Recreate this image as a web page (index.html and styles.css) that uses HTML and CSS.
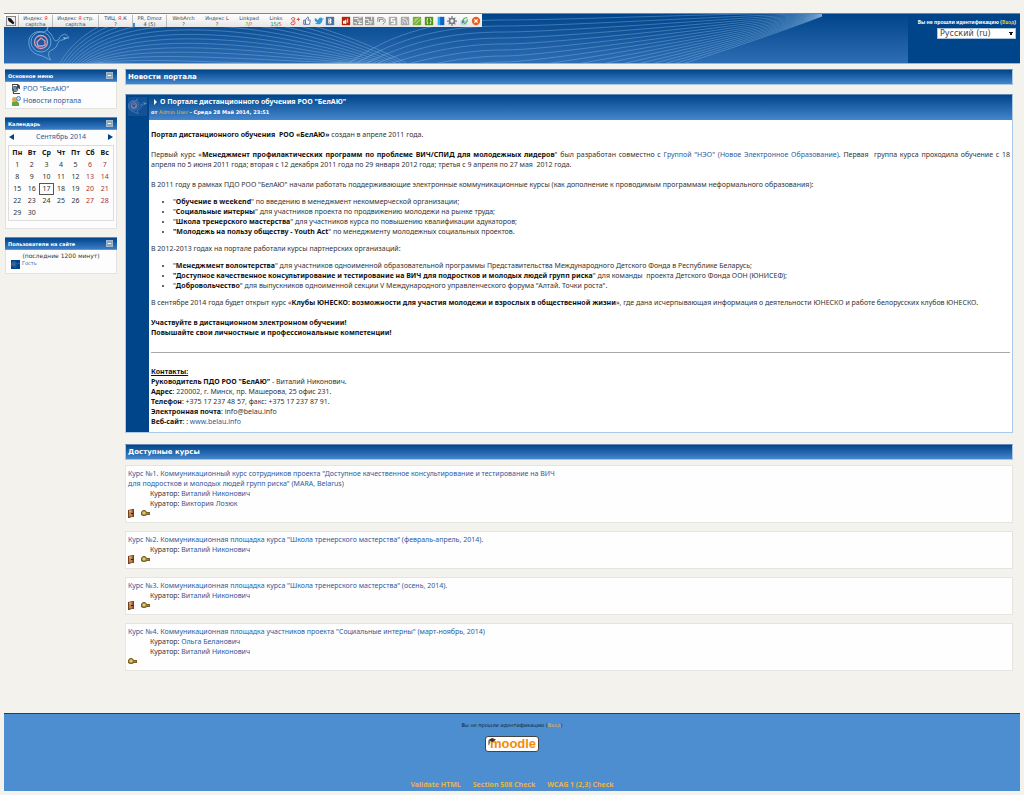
FILE: index.html
```html
<!DOCTYPE html>
<html lang="ru">
<head>
<meta charset="utf-8">
<title>Портал дистанционного обучения РОО "БелАЮ"</title>
<link rel="stylesheet" href="styles.css">
</head>
<body>
<svg class="defs" width="0" height="0" aria-hidden="true">
  <symbol id="bird" viewBox="0 0 42 36">
    <g fill="none" stroke="#6ba3d8" stroke-width="1">
      <path d="M20 1c-1 3-1 4 2 6 4 4 3 10 8 7 3-3 2-5 5-5 2-2 4 0 6 3-3-1-4 2-7 2-5 0-4 6-7 8-2 2-5 2-6 4-1 3 0 6 2 8-4-1-7-4-12-5C4 27 0 22 1 14 2 8 9 4 15 6c3 0 4-2 5-5z"/>
      <circle cx="13" cy="16" r="10"/>
    </g>
    <path d="M35 11l5 1-4 1z" fill="#9cc4ea"/>
    <g fill="none" stroke="#dc9db4" stroke-width="1.3">
      <circle cx="13" cy="16" r="6.5"/>
      <path d="M9 16l4-4 4 3v4l-3 1h-4z"/>
    </g>
  </symbol>
  <symbol id="key" viewBox="0 0 9 7">
    <path d="M0 2l2-2h2l2 2h3v3H6L4 6H2L0 5z" fill="#7a6026"/>
    <circle cx="3" cy="3" r="1.8" fill="#dfc878"/><path d="M5 3.5h3" stroke="#b5781f"/>
  </symbol>
  <symbol id="door" viewBox="0 0 6 9">
    <path d="M0 1l5-1h1v8H4L1 9H0z" fill="#6b4222"/><path d="M1 1l3.500 0v6.500l-3.500 0z" fill="#c58550"/><path d="M3 4h2v1H3z" fill="#33200f"/><path d="M1 2h2v1H1z" fill="#e0ad7c"/>
  </symbol>
</svg>

<header class="header">
  <svg class="waves" id="waves" aria-hidden="true"></svg>
  <svg class="brand" aria-hidden="true"><use href="#bird"/></svg>
  <div class="account">
    <p>Вы не прошли идентификацию (<a href="#login">Вход</a>)</p>
    <select class="lang" aria-label="Язык"><option>Русский (ru)</option></select>
  </div>
  <div class="toolbar">
    <button class="pen" aria-label="Инструменты"><svg viewBox="0 0 12 12"><path d="M0 0h12v12H0z" fill="#777"/><path d="M1 1h10v10H1z" fill="#eee"/><path d="M2 2l4 1 4 5-1 2-2-1-4-3z" fill="#111"/></svg></button>
    <button class="w34 sep">Индекс <b>Я</b><br>captcha</button>
    <button class="w46 sep">Индекс <b>Я</b> стр.<br>captcha</button>
    <button class="w34 sep">ТИЦ, <b>Я</b>.К<br>?</button>
    <button class="w34 sep bar">PR, Dmoz<br>4 (5)</button>
    <button class="w34 sep">WebArch<br>?</button>
    <button class="w34">Индекс L<br>?</button>
    <button class="w30">Linkpad<br><i>?</i>/<b>?</b></button>
    <button class="w24">Links<br><i>15</i>/<b>5</b></button>
    <div class="icons">
      <svg viewBox="0 0 12 12"><path d="M6 3C4 1 1 2 2 4s4 1 4-1M5 5c-1 1 2 2 1 4s-5 2-5 0 3-2 4-2M8 4h4M10 2v4" stroke="#d55140" stroke-width="1.200" fill="none"/></svg>
      <svg viewBox="0 0 12 12"><path d="M2 5h2v5H2zM4 5l3-4 1 1-1 3h3l-1 5H4z" fill="#fff" stroke="#4a68a5"/></svg>
      <svg viewBox="0 0 12 12"><path d="M1 2l4 3c0-4 4-4 5-2l2 0-2 2c0 5-6 6-9 4l3-1-3-2z" fill="#2a9fd8"/></svg>
      <svg viewBox="0 0 12 12"><path d="M1 1h10v10H1z" fill="#4b75a5"/><path d="M4 3h3l1 2-1 1 1 2-1 1H4z" fill="#fff"/><path d="M5 4h1v1H5zM5 7h1v1H5z" fill="#4b75a5"/></svg>
      <svg class="gap" viewBox="0 0 12 12"><path d="M1 1h10v10H1z" fill="#b62507"/><path d="M3 6h1v3H3zM5 5h1v4H5zM8 3v5" stroke="#fff" fill="#fff"/></svg>
      <svg viewBox="0 0 12 12"><path d="M0 1h12v10H0z" fill="#999"/><path d="M1 3h5v3h5M1 8h3v2M7 2h3M6 9h5M8 7v3" stroke="#fff" fill="none"/></svg>
      <svg viewBox="0 0 12 12"><path d="M0 1h11v10H0z" fill="#999"/><path d="M0 4h4v3h5M1 9h4M8 1v4M7 10V7" stroke="#fff" fill="none"/></svg>
      <svg viewBox="0 0 12 12"><path d="M1 7V2h5c5 1 5 5 1 8M3 7V4h3c2 0 2 2 1 3" stroke="#888" stroke-width="1.200" fill="none"/></svg>
      <svg viewBox="0 0 12 12"><path d="M1 1h10v10H1z" fill="#aaa"/><path d="M8 3H4v3h4v3H4" stroke="#fff" stroke-width="1.500" fill="none"/></svg>
      <svg viewBox="0 0 12 12"><path d="M1 1h10v10H1z" fill="#aaa"/><path d="M3 3c4 0 6 2 6 6M3 6c2 0 3 1 3 3M3 8v1" stroke="#fff" fill="none"/></svg>
      <svg viewBox="0 0 12 12"><path d="M1 1h10v10H1z" fill="#76ae35"/><path d="M2 8l6-6M4 10l6-6M3 5l2-2" stroke="#e2f2cb" fill="none"/></svg>
      <svg viewBox="0 0 12 12"><path d="M1 1h10v10H1z" fill="#4f9810"/><path d="M5 3H4v2L3 6l1 1v2h1M7 3h1v2l1 1-1 1v2H7" stroke="#fff" fill="none"/></svg>
      <svg viewBox="0 0 12 12"><path d="M2 1h4v10H2z" fill="#29b2f0"/><path d="M5 1h5v10H5z" fill="#1262c8"/></svg>
      <svg viewBox="0 0 12 12"><circle cx="6" cy="6" r="3" stroke="#777c87" stroke-width="2" fill="none"/><path d="M6 0v3M6 9v3M0 6h3M9 6h3M2 2l2 2M8 8l2 2M2 10l2-2M8 4l2-2" stroke="#777c87" stroke-width="1.500"/></svg>
      <svg viewBox="0 0 12 12"><path d="M2 5h7v6H2z" fill="#bbd7ef"/><path d="M4 9c0-5 2-7 6-7M6 9c3 0 4-2 4-5" stroke="#5cb75b" stroke-width="1.500" fill="none"/><circle cx="5" cy="7" r="1.500" fill="#4782be"/></svg>
      <svg viewBox="0 0 12 12"><circle cx="6" cy="6" r="5" fill="#e95f26"/><path d="M4 4l4 4M8 4L4 8" stroke="#fff" stroke-width="1.500"/></svg>
    </div>
  </div>
</header>

<div class="columns">
  <aside class="side">
    <section class="block">
      <h2 class="block-head">Основное меню<button aria-label="Свернуть"></button></h2>
      <ul class="menu">
        <li><svg viewBox="0 0 10 10"><path d="M1 0h6l2 2v8H2z" fill="#444"/><path d="M2 1h4v3l3 1v4H3z" fill="#fff"/><circle cx="4" cy="5" r="3" fill="#465967"/><path d="M2 4h3M3 6h3" stroke="#a7c9e0"/></svg><a href="#belau">РОО "БелАЮ"</a></li>
        <li><svg viewBox="0 0 10 10"><path d="M1 10V6l2-1h3l2 2v3z" fill="#64a53c"/><circle cx="3.500" cy="3.500" r="2.500" fill="#e0a94b"/><circle cx="7.500" cy="2.500" r="2" fill="#c9e2f8" stroke="#4c86bb"/></svg><a href="#news">Новости портала</a></li>
      </ul>
    </section>
    <section class="block">
      <h2 class="block-head">Календарь<button aria-label="Свернуть"></button></h2>
      <div class="month"><a href="#prev" aria-label="Назад"><svg viewBox="0 0 5 6"><path d="M5 0v6L0 3z"/></svg></a><a href="#month">Сентябрь 2014</a><a href="#next" aria-label="Вперёд"><svg viewBox="0 0 5 6"><path d="M0 0v6l5-3z"/></svg></a></div>
      <table class="calendar">
        <tr><th>Пн</th><th>Вт</th><th>Ср</th><th>Чт</th><th>Пт</th><th>Сб</th><th>Вс</th></tr>
        <tr><td>1</td><td>2</td><td>3</td><td>4</td><td>5</td><td>6</td><td>7</td></tr>
        <tr><td>8</td><td>9</td><td>10</td><td>11</td><td>12</td><td>13</td><td>14</td></tr>
        <tr><td>15</td><td>16</td><td class="today">17</td><td>18</td><td>19</td><td>20</td><td>21</td></tr>
        <tr><td>22</td><td>23</td><td>24</td><td>25</td><td>26</td><td>27</td><td>28</td></tr>
        <tr><td>29</td><td>30</td><td></td><td></td><td></td><td></td><td></td></tr>
      </table>
    </section>
    <section class="block">
      <h2 class="block-head">Пользователи на сайте<button aria-label="Свернуть"></button></h2>
      <div class="online">
        <p>(последние 1200 минут)</p>
        <div class="guest"><svg viewBox="0 0 42 36"><use href="#bird"/></svg><a href="#guest">Гость</a></div>
      </div>
    </section>
  </aside>

  <main class="main">
    <h2 class="bar-head">Новости портала</h2>
    <article class="post">
      <div class="rail"><svg viewBox="0 0 42 36"><use href="#bird"/></svg></div>
      <div class="post-body">
        <header class="post-head">
          <h3><svg viewBox="0 0 3 6"><path d="M0 0v6l3-3z" fill="#fff"/></svg>О Портале дистанционного обучения РОО "БелАЮ"</h3>
          <p>от <a href="#admin">Admin User</a> - Среда 28 Май 2014, 23:51</p>
        </header>
        <div class="content">
          <p><b>Портал дистанционного обучения&nbsp; РОО «БелАЮ»</b> создан в апреле 2011 года.</p>
          <p class="gap10 justified">Первый курс «<b>Менеджмент профилактических программ по проблеме ВИЧ/СПИД для молодежных лидеров</b>" был разработан совместно с <a href="#neo">Группой "НЭО" (Новое Электронное Образование)</a>. Первая&nbsp; группа курса проходила обучение с 18 апреля по 5 июня 2011 года; вторая с 12 декабря 2011 года по 29 января 2012 года; третья с 9 апреля по 27 мая&nbsp; 2012 года.</p>
          <p class="gap10">В 2011 году в рамках ПДО РОО "БелАЮ" начали работать поддерживающие электронные коммуникационные курсы (как дополнение к проводимым программам неформального образования):</p>
          <ul>
            <li>"<b>Обучение в weekend</b>" по введению в менеджмент некоммерческой организации;</li>
            <li>"<b>Социальные интерны</b>" для участников проекта по продвижению молодежи на рынке труда;</li>
            <li>"<b>Школа тренерского мастерства</b>" для участников курса по повышению квалификации адукаторов;</li>
            <li><b>"Молодежь на пользу обществу - Youth Act</b>" по менеджменту молодежных социальных проектов.</li>
          </ul>
          <p>В 2012-2013 годах на портале работали курсы партнерских организаций:</p>
          <ul>
            <li>"<b>Менеджмент волонтерства</b>" для участников одноименной образовательной программы Представительства Международного Детского Фонда в Республике Беларусь;</li>
            <li><b>"Доступное качественное консультирование и тестирование на ВИЧ для подростков и молодых людей групп риска</b>" для команды&nbsp; проекта Детского Фонда ООН (ЮНИСЕФ);</li>
            <li>"<b>Добровольчество</b>" для выпускников одноименной секции V Международного управленческого форума "Алтай. Точки роста".</li>
          </ul>
          <p>В сентябре 2014 года будет открыт курс «<b>Клубы ЮНЕСКО: возможности для участия молодежи и взрослых в общественной жизни</b>», где дана исчерпывающая информация о деятельности ЮНЕСКО и работе белорусских клубов ЮНЕСКО.</p>
          <p class="gap10"><b>Участвуйте в дистанционном электронном обучении!<br>Повышайте свои личностные и профессиональные компетенции!</b></p>
          <hr>
          <p><b><u>Контакты:</u></b><br><b>Руководитель ПДО РОО "БелАЮ"</b> - Виталий Никонович.<br><b>Адрес</b>: 220002, г. Минск, пр. Машерова, 25 офис 231.<br><b>Телефон</b>: +375 17 237 48 57, факс: +375 17 237 87 91.<br><b>Электронная почта</b>: info@belau.info<br><b>Веб-сайт</b>: : <a href="#site">www.belau.info</a></p>
        </div>
      </div>
    </article>

    <h2 class="bar-head">Доступные курсы</h2>
    <div class="courses">
      <section class="course">
        <a href="#c1">Курс №1. Коммуникационный курс сотрудников проекта "Доступное качественное консультирование и тестирование на ВИЧ<br>для подростков и молодых людей групп риска" (MARA, Belarus)</a>
        <ul><li>Куратор: <a href="#n">Виталий Никонович</a></li><li>Куратор: <a href="#l">Виктория Лозюк</a></li></ul>
        <div class="access"><svg class="door"><use href="#door"/></svg><svg class="key"><use href="#key"/></svg></div>
      </section>
      <section class="course">
        <a href="#c2">Курс №2. Коммуникационная площадка курса "Школа тренерского мастерства" (февраль-апрель, 2014).</a>
        <ul><li>Куратор: <a href="#n">Виталий Никонович</a></li></ul>
        <div class="access"><svg class="door"><use href="#door"/></svg><svg class="key"><use href="#key"/></svg></div>
      </section>
      <section class="course">
        <a href="#c3">Курс №3. Коммуникационная площадка курса "Школа тренерского мастерства" (осень, 2014).</a>
        <ul><li>Куратор: <a href="#n">Виталий Никонович</a></li></ul>
        <div class="access"><svg class="door"><use href="#door"/></svg><svg class="key"><use href="#key"/></svg></div>
      </section>
      <section class="course">
        <a href="#c4">Курс №4. Коммуникационная площадка участников проекта "Социальные интерны" (март-ноябрь, 2014)</a>
        <ul><li>Куратор: <a href="#b">Ольга Беланович</a></li><li>Куратор: <a href="#n">Виталий Никонович</a></li></ul>
        <div class="access"><svg class="key"><use href="#key"/></svg></div>
      </section>
    </div>
  </main>
</div>

<footer class="footer">
  <p>Вы не прошли идентификацию (<a href="#login">Вход</a>)</p>
  <a class="moodle" href="#moodle"><svg viewBox="0 0 10 9"><path d="M0 3l5-3 5 2-4 3z" fill="#333"/><path d="M2 4v3M1 4v5" stroke="#444" fill="none"/></svg>moodle</a>
  <nav><a href="#html">Validate HTML</a><a href="#s508">Section 508 Check</a><a href="#wcag">WCAG 1 (2,3) Check</a></nav>
</footer>
<script src="waves.js"></script>
</body>
</html>
```
FILE: styles.css
```css
* { box-sizing: border-box; }
body {
  margin: 0;
  padding: 13px 4px 4px;
  background: #f3f2ed;
  color: #333;
  font: 7px/10px "Noto Sans", Tahoma, sans-serif;
}
a { color: #2f5a9b; text-decoration: none; }
b { color: #111; }
p, h2, h3, ul { margin: 0; padding: 0; }
svg { display: block; flex: none; }
button { border: 0; padding: 0; background: none; font: inherit; color: inherit; }
.defs { position: absolute; }

.header {
  position: relative;
  display: flex;
  justify-content: flex-end;
  height: 51px;
  border-top: 1px solid #5f8ab5;
  border-bottom: 1px solid #d8b53a;
  background: linear-gradient(#00448a, #2e6db3);
}
.waves { position: absolute; left: 0; top: 0; width: 830px; height: 49px; }
.waves path { fill: none; stroke: #8fbce8; stroke-opacity: .38; }
.brand { position: absolute; left: 24px; top: 12px; width: 42px; height: 36px; }
.account {
  display: flex;
  flex-direction: column;
  align-items: flex-end;
  gap: 1px;
  width: 112px;
  padding: 3px 4px 0 0;
  background: #00448a;
  color: #fff;
  font-size: 5px;
  font-weight: bold;
  white-space: nowrap;
}
.account a { color: #efb33a; }
.lang {
  appearance: none;
  width: 79px;
  height: 11px;
  padding: 0 2px;
  border: 1px solid #aac4df;
  border-radius: 0;
  color: #444;
  font: 8px/9px "DejaVu Sans", Verdana, sans-serif;
  background: linear-gradient(#111, #111) no-repeat right 2px top 3px / 4px 1px,
    linear-gradient(#111, #111) no-repeat right 3px top 4px / 2px 2px, #fff;
}
.toolbar {
  position: absolute;
  left: 0;
  top: 0;
  display: flex;
  align-items: center;
  width: 478px;
  height: 13px;
  background: linear-gradient(#fff, #e6e6e6);
  color: #444;
  font: 5px/6px "DejaVu Sans", sans-serif;
  white-space: nowrap;
}
.toolbar b { color: #e33; font-weight: normal; }
.toolbar i { color: #292; font-style: normal; }
.pen { width: 14px; padding: 0 2px; }
.sep { border-left: 1px solid #bbb; }
.bar { background: linear-gradient(#2a93dc, #2a93dc) no-repeat 0 8px / 2px 4px; }
.w34 { width: 34px; }
.w46 { width: 46px; }
.w30 { width: 30px; }
.w24 { width: 24px; }
.icons { display: flex; flex: 1; justify-content: space-between; padding: 0 1px 0 2px; }
.icons svg { width: 10px; height: 10px; }
.icons .gap { margin-left: 4px; }

.columns { display: flex; gap: 8px; padding: 5px 7px 0 1px; }
.side { display: flex; flex-direction: column; gap: 8px; flex: 0 0 112px; }
.block { border: 1px solid #e2e2df; border-top: 0; background: #fdfdfd; }
.block-head {
  display: flex;
  align-items: center;
  justify-content: space-between;
  height: 13px;
  margin: 0 -1px;
  padding: 0 4px 0 3px;
  border-top: 1px solid #5f8ab5;
  border-bottom: 1px solid #5f97d2;
  background: linear-gradient(#00448a, #3a7cc4);
  color: #fff;
  font: bold 5px/10px "DejaVu Sans", Verdana, sans-serif;
}
.block-head button {
  width: 7px;
  height: 7px;
  border: 1px solid #a5b9cd;
  background: linear-gradient(#fff, #fff) no-repeat center / 3px 1px, #8da5bd;
}
.menu { padding: 1px 5px; list-style: none; }
.menu li { display: flex; align-items: center; gap: 2px; height: 12px; }
.menu svg { width: 10px; height: 10px; }
.month { display: flex; align-items: center; justify-content: space-between; height: 13px; padding: 0 3px; }
.month svg { width: 5px; height: 6px; fill: #00448a; }
.calendar {
  width: calc(100% - 4px);
  margin: 2px 2px 7px;
  padding: 1px;
  border: 1px solid #ddd;
  border-spacing: 0;
  table-layout: fixed;
}
.calendar td, .calendar th { height: 12px; padding: 0; text-align: center; }
.calendar th { color: #111; }
.calendar td:nth-child(n+6) { color: #a33; }
.calendar .today { border: 1px solid #555; }
.online { padding: 2px 5px 4px; }
.online p { text-align: center; font: 6px/8px "DejaVu Sans", Verdana, sans-serif; }
.guest { display: flex; gap: 2px; font: 5px/6px "DejaVu Sans", Verdana, sans-serif; }
.guest svg { width: 9px; height: 9px; background: #00448a; }

.main { flex: 1; min-width: 0; }
.bar-head {
  height: 16px;
  padding: 0 2px;
  border: 1px solid #a9c6e4;
  border-top-color: #5f8ab5;
  background: linear-gradient(#00448a, #4586cc);
  color: #fff;
  font: bold 7px/15px "DejaVu Sans", Verdana, sans-serif;
}
.post {
  display: flex;
  margin: 9px 0 11px;
  border: 1px solid #a9c9e8;
  border-top-color: #5f8ab5;
  background: #fff;
}
.rail { flex: 0 0 23px; padding: 2px; background: #00448a; }
.rail svg { width: 19px; height: 19px; background: #145194; }
.post-body { flex: 1; min-width: 0; }
.post-head {
  height: 25px;
  padding: 2px 2px 0;
  background: linear-gradient(#00448a, #4586cc);
  color: #fff;
}
.post-head h3 { display: flex; align-items: center; gap: 3px; padding-left: 3px; font-size: 7px; }
.post-head svg { width: 3px; height: 6px; }
.post-head p { font: bold 5px/11px "DejaVu Sans", Verdana, sans-serif; }
.post-head a { color: #efb33a; font-weight: normal; }
.content { padding: 10px 2px 5px; }
.content ul { margin: 7px 0; padding-left: 22px; }
.content .gap10 { margin-top: 10px; }
.content .justified { text-align: justify; }
.content hr { margin: 14px 0; border: 0; border-top: 1px solid #aaa; }

.courses { display: flex; flex-direction: column; gap: 8px; margin-top: 5px; }
.course { padding: 3px 2px 4px; border: 1px solid #e4e4e1; background: #fefefe; }
.course ul { padding-left: 22px; list-style: none; }
.access { display: flex; align-items: center; gap: 7px; height: 9px; }
.door { width: 6px; height: 9px; }
.key { width: 9px; height: 7px; }

.footer {
  display: flex;
  flex-direction: column;
  align-items: center;
  min-height: 78px;
  margin-top: 42px;
  padding-top: 6px;
  border-top: 1px solid #00448a;
  background: #4c8ecf;
  color: #123;
}
.footer p { font: 5px/10px "DejaVu Sans", Verdana, sans-serif; }
.footer a { color: #e6b450; }
.footer .moodle {
  display: flex;
  align-items: center;
  margin-top: 6px;
  height: 16px;
  padding: 0 2px;
  border: 1px solid #444;
  border-radius: 3px;
  background: #fff;
  color: #ef8d0b;
  font: bold 13px/14px "Liberation Sans", Arial, sans-serif;
}
.moodle svg { width: 8px; height: 9px; margin-right: -6px; z-index: 1; align-self: flex-start; }
.footer nav { display: flex; gap: 12px; margin-top: auto; padding-bottom: 1px; font-weight: bold; }
```
FILE: waves.js
```javascript
// Draws the fans of thin curves behind the site banner.
const svg = document.getElementById('waves');
function curve(d) {
  const path = document.createElementNS('http://www.w3.org/2000/svg', 'path');
  path.setAttribute('d', d);
  svg.appendChild(path);
}
for (let i = 0; i < 14; i++) {
  const y = i * 6;
  curve(`M${56 + i * 3} 49 C${100 + i * 4} ${-30 + y} ${270 - i * 3} ${-20 + y} ${402 - i * 5} 49`);
}
for (let i = 0; i < 17; i++) {
  const y = 6 + i * 6;
  const end = i / 5 - 1;
  curve(`M${341 + i * 4} ${52 + i * 2} C${390 + i * 5} ${10 + y} ${440 + i * 3} ${y} 500 ${y} S${728 - i} ${end + i * 2.5} 818 ${end}`);
}
```
